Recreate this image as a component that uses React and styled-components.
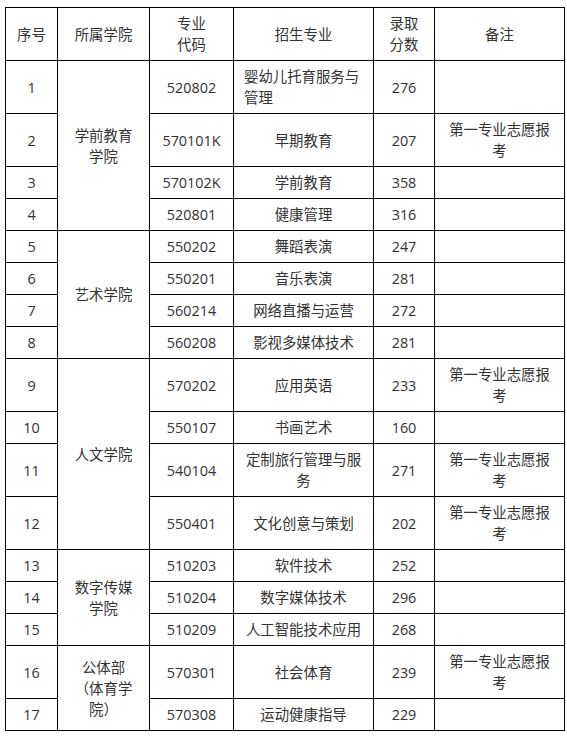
import React from "react";
import styled, { createGlobalStyle } from "styled-components";

const Global = createGlobalStyle`
  html, body { margin: 0; padding: 0; background: #fff; }
  body { font-family: "Open Sans", "Noto Sans CJK SC", sans-serif; }
`;

const Page = styled.div`
  padding: 7px 0 0 5px;
`;

const Table = styled.table`
  border-collapse: collapse;
  table-layout: fixed;
  width: 559px;
  color: #333;
  font-family: "Open Sans", "Noto Sans CJK SC", sans-serif;
  font-size: 14.4px;
  line-height: 21px;
`;

const Cell = styled.td`
  border: 1px solid #000;
  padding: 5px 10px;
  text-align: ${(p) => (p.$left ? "left" : "center")};
  vertical-align: middle;
  word-break: break-all;
`;

const HeadCell = styled(Cell).attrs({ as: "th" })`
  font-weight: normal;
`;

const widths = [52, 92, 84, 140, 61, 130];

const NOTE = (
  <>
    第一专业志愿报<br />考
  </>
);

const rows = [
  { n: 1, college: { text: <>学前教育<br />学院</>, span: 4 }, code: "520802", major: <>婴幼儿托育服务与<br />管理</>, left: true, score: 276 },
  { n: 2, code: "570101K", major: "早期教育", score: 207, note: true },
  { n: 3, code: "570102K", major: "学前教育", score: 358 },
  { n: 4, code: "520801", major: "健康管理", score: 316 },
  { n: 5, college: { text: "艺术学院", span: 4 }, code: "550202", major: "舞蹈表演", score: 247 },
  { n: 6, code: "550201", major: "音乐表演", score: 281 },
  { n: 7, code: "560214", major: "网络直播与运营", score: 272 },
  { n: 8, code: "560208", major: "影视多媒体技术", score: 281 },
  { n: 9, college: { text: "人文学院", span: 4 }, code: "570202", major: "应用英语", score: 233, note: true },
  { n: 10, code: "550107", major: "书画艺术", score: 160 },
  { n: 11, code: "540104", major: <>定制旅行管理与服<br />务</>, score: 271, note: true },
  { n: 12, code: "550401", major: "文化创意与策划", score: 202, note: true },
  { n: 13, college: { text: <>数字传媒<br />学院</>, span: 3 }, code: "510203", major: "软件技术", score: 252 },
  { n: 14, code: "510204", major: "数字媒体技术", score: 296 },
  { n: 15, code: "510209", major: "人工智能技术应用", score: 268 },
  { n: 16, college: { text: <>公体部<br />（体育学<br />院）</>, span: 2 }, code: "570301", major: "社会体育", score: 239, note: true },
  { n: 17, code: "570308", major: "运动健康指导", score: 229 },
];

export default function App() {
  return (
    <Page>
      <Global />
      <Table>
        <colgroup>
          {widths.map((w, i) => (
            <col key={i} style={{ width: w }} />
          ))}
        </colgroup>
        <thead>
          <tr>
            <HeadCell>序号</HeadCell>
            <HeadCell>所属学院</HeadCell>
            <HeadCell>专业<br />代码</HeadCell>
            <HeadCell>招生专业</HeadCell>
            <HeadCell>录取<br />分数</HeadCell>
            <HeadCell>备注</HeadCell>
          </tr>
        </thead>
        <tbody>
          {rows.map((r) => (
            <tr key={r.n}>
              <Cell>{r.n}</Cell>
              {r.college && <Cell rowSpan={r.college.span}>{r.college.text}</Cell>}
              <Cell>{r.code}</Cell>
              <Cell $left={r.left}>{r.major}</Cell>
              <Cell>{r.score}</Cell>
              <Cell>{r.note ? NOTE : null}</Cell>
            </tr>
          ))}
        </tbody>
      </Table>
    </Page>
  );
}
